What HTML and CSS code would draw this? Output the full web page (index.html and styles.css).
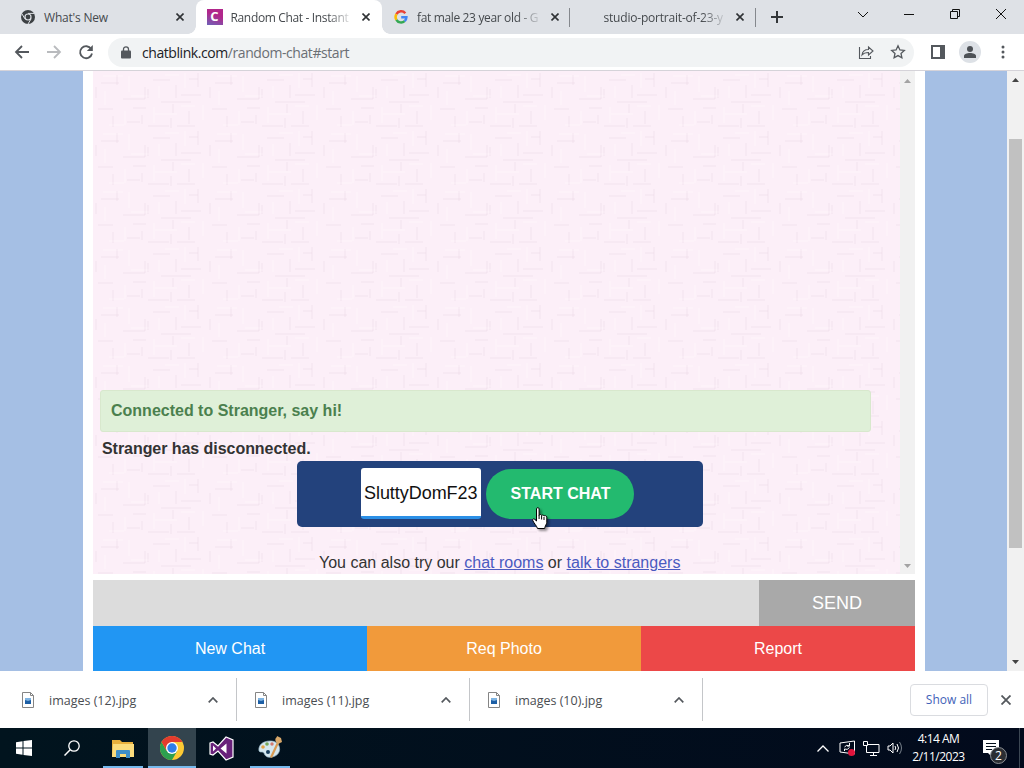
FILE: index.html
```html
<!DOCTYPE html>
<html>

<head>
    <meta charset="utf-8">
    <title>Random Chat - Instant</title>
    <link rel="stylesheet" href="styles.css">
</head>

<body>
    <div class="tabs">
        <div class="tab">
            <svg class="fav" viewBox="0 0 16 16"><circle cx="8" cy="8" r="7" fill="#3c4043"/><path d="M8 4.4h6.2M4.9 9.8L1.8 4.6M11.1 9.8L8 15" stroke="#dee1e6" stroke-width="1"/><circle cx="8" cy="8" r="3.6" fill="#dee1e6"/><circle cx="8" cy="8" r="2.4" fill="#3c4043"/></svg>
            <span class="title">What's New</span>
            <svg class="x" viewBox="0 0 8 8"><path d="M.5.5l7 7M7.5.5l-7 7"/></svg>
        </div>
        <div class="tab active">
            <span class="fav blink">C</span>
            <span class="title fade">Random Chat - Instant</span>
            <svg class="x" viewBox="0 0 8 8"><path d="M.5.5l7 7M7.5.5l-7 7"/></svg>
        </div>
        <div class="tab">
            <svg class="fav" viewBox="0 0 16 16" fill="none" stroke-width="2.5"><path d="M12.3 4.2A5.4 5.4 0 0 0 3.4 5.2" stroke="#ea4335"/><path d="M3.4 5.2a5.4 5.4 0 0 0 0 5.6" stroke="#fbbc05"/><path d="M3.4 10.8a5.4 5.4 0 0 0 8.2 1.3" stroke="#34a853"/><path d="M11.6 12.1a5.4 5.4 0 0 0 1.8-3.9H8.2" stroke="#4285f4"/></svg>
            <span class="title fade">fat male 23 year old - G</span>
            <svg class="x" viewBox="0 0 8 8"><path d="M.5.5l7 7M7.5.5l-7 7"/></svg>
        </div>
        <div class="tab line">
            <span class="fav"></span>
            <span class="title fade wide">studio-portrait-of-23-y</span>
            <svg class="x" viewBox="0 0 8 8"><path d="M.5.5l7 7M7.5.5l-7 7"/></svg>
        </div>
        <div class="plus line"><svg width="12" height="12" viewBox="0 0 12 12"><path d="M6 0v12M0 6h12" stroke="#333639" stroke-width="2"/></svg></div>
        <div class="winbtns">
            <svg width="46" height="28" viewBox="0 0 46 28"><path d="M18 12l5 5 5-5"/></svg>
            <svg width="46" height="28" viewBox="0 0 46 28"><path d="M18 14.5h10"/></svg>
            <svg width="46" height="28" viewBox="0 0 46 28"><path d="M18.5 11.5h7v7h-7zM20.5 11.5v-2h7v7h-2"/></svg>
            <svg width="46" height="28" viewBox="0 0 46 28"><path d="M18 9l10 10M28 9L18 19"/></svg>
        </div>
    </div>

    <div class="toolbar">
        <svg class="nav" viewBox="0 0 16 16"><path d="M15 8H2M8 2L2 8l6 6"/></svg>
        <svg class="nav off" viewBox="0 0 16 16"><path d="M1 8h13M8 2l6 6-6 6"/></svg>
        <svg class="nav" viewBox="0 0 16 16"><path d="M13.2 5A6 6 0 1 0 14 9.5"/><path d="M14.8 1v6H8.8z" fill="#54585d" stroke="none"/></svg>
        <div class="url">
            <svg width="10" height="13" viewBox="0 0 10 13"><rect y="4.5" width="10" height="8" rx="1" fill="#54585d"/><path d="M2.5 5V3.3a2.5 2.5 0 0 1 5 0V5" fill="none" stroke="#54585d" stroke-width="1.3"/></svg>
            <span class="addr">chatblink.com<i>/random-chat#start</i></span>
            <svg class="share" width="16" height="16" viewBox="0 0 16 16"><path d="M1.5 3v11.5h11V12M4 11c.5-3.5 2.5-5.5 6.5-5.5V3L15 7l-4.500 4V8.500C7.500 8.500 5.500 9.200 4 11z"/></svg>
            <svg class="star" width="16" height="16" viewBox="0 0 16 16"><path d="M8 1.8l1.9 4.1 4.4.5-3.3 3 .9 4.4L8 11.6l-3.9 2.2.9-4.4-3.3-3 4.4-.5z"/></svg>
        </div>
        <svg class="side" width="14" height="14" viewBox="0 0 14 14"><path d="M1 1h12v12H1z" fill="none" stroke="#54585d" stroke-width="2"/><path d="M9 0h5v14H9z" fill="#54585d"/></svg>
        <svg class="user" width="22" height="22" viewBox="0 0 22 22"><circle cx="11" cy="11" r="11" fill="#dde1e6"/><circle cx="11" cy="8" r="3" fill="#4d5156"/><path d="M5 17v-2c0-2 3-3 6-3s6 1 6 3v2z" fill="#4d5156"/></svg>
        <svg class="dots" width="4" height="14" viewBox="0 0 4 14"><circle cx="2" cy="2" r="1.5"/><circle cx="2" cy="7" r="1.5"/><circle cx="2" cy="12" r="1.5"/></svg>
    </div>

    <div class="page">
        <div class="main">
            <div class="chat">
                <div class="log">
                    <div class="alert">Connected to Stranger, say hi!</div>
                    <div class="gone">Stranger has disconnected.</div>
                    <div class="startbox">
                        <input class="nick" type="text" value="SluttyDomF23">
                        <button class="start">START CHAT</button>
                        <svg class="hand" viewBox="0 0 17 24"><path d="M5 1.8c0-1.5 2.6-1.5 2.6 0v6.5c.3-1.2 2.4-1 2.5.3.3-1 2.3-.8 2.4.5.4-.9 2.8-.6 2.8 1v5.200c0 2-1.800 3.300-2.100 6.200H6c-.5-2.300-4-5.800-4.800-8.200-.4-1.500 1.200-2 2.200-.8L5 14z" fill="#fff" stroke="#000"/><path d="M7.600 8v4M10.100 9v3.500M12.500 10v3" stroke="#000"/></svg>
                    </div>
                    <p class="also">You can also try our <a href="#">chat rooms</a> or <a href="#">talk to strangers</a></p>
                </div>
                <div class="bar">
                    <svg width="7" height="4" viewBox="0 0 7 4"><path d="M0 4l3.5-4L7 4z"/></svg>
                    <svg width="7" height="4" viewBox="0 0 7 4"><path d="M0 0l3.5 4L7 0z"/></svg>
                </div>
            </div>
            <div class="message">
                <div class="text"></div>
                <div class="send">SEND</div>
            </div>
            <div class="actions">
                <div class="new">New Chat</div>
                <div class="photo">Req Photo</div>
                <div class="report">Report</div>
            </div>
        </div>
        <div class="scroll">
            <svg width="7" height="4" viewBox="0 0 7 4"><path d="M0 4l3.5-4L7 4z"/></svg>
            <div class="thumb"></div>
            <svg width="7" height="4" viewBox="0 0 7 4"><path d="M0 0l3.5 4L7 0z"/></svg>
        </div>
    </div>

    <div class="downloads">
        <div class="file">
            <svg width="12" height="16" viewBox="0 0 12 16"><path d="M.5.5h8l3 3v12H.5z" fill="#fff" stroke="#858585"/><path d="M8.5.5v3h3" fill="none" stroke="#858585"/><path d="M3 6h6v6H3z" fill="#1d5fa5"/><path d="M3 6h6v2L6 9 3 8z" fill="#7fb4e2"/></svg>
            <span>images (12).jpg</span>
            <svg class="up" width="10" height="6" viewBox="0 0 10 6"><path d="M.7 5.3L5 1l4.3 4.3"/></svg>
        </div>
        <div class="file">
            <svg width="12" height="16" viewBox="0 0 12 16"><path d="M.5.5h8l3 3v12H.5z" fill="#fff" stroke="#858585"/><path d="M8.5.5v3h3" fill="none" stroke="#858585"/><path d="M3 6h6v6H3z" fill="#1d5fa5"/><path d="M3 6h6v2L6 9 3 8z" fill="#7fb4e2"/></svg>
            <span>images (11).jpg</span>
            <svg class="up" width="10" height="6" viewBox="0 0 10 6"><path d="M.7 5.3L5 1l4.3 4.3"/></svg>
        </div>
        <div class="file">
            <svg width="12" height="16" viewBox="0 0 12 16"><path d="M.5.5h8l3 3v12H.5z" fill="#fff" stroke="#858585"/><path d="M8.5.5v3h3" fill="none" stroke="#858585"/><path d="M3 6h6v6H3z" fill="#1d5fa5"/><path d="M3 6h6v2L6 9 3 8z" fill="#7fb4e2"/></svg>
            <span>images (10).jpg</span>
            <svg class="up" width="10" height="6" viewBox="0 0 10 6"><path d="M.7 5.3L5 1l4.3 4.3"/></svg>
        </div>
        <div class="showall">Show all</div>
        <svg class="close" width="10" height="10" viewBox="0 0 10 10"><path d="M.5.5l9 9M9.5.5l-9 9"/></svg>
    </div>

    <div class="taskbar">
        <div class="task win"><svg width="16" height="16" viewBox="0 0 16 16"><path d="M0 2.2L6.5 1.3v6.2H0zM7.5 1.1L16 0v7.500H7.500zM0 8.500h6.500v6.200L0 13.800zM7.500 8.500H16V16l-8.500-1.100z" fill="#fff"/></svg></div>
        <div class="task find"><svg width="16" height="16" viewBox="0 0 16 16"><circle cx="10" cy="6" r="5.2" fill="none" stroke="#fff" stroke-width="1.3"/><path d="M6.2 9.8L.5 15.5" stroke="#fff" stroke-width="1.5"/></svg></div>
        <div class="task open"><svg width="22" height="19" viewBox="0 0 22 19"><path d="M0 1h8l2 2h11v15H0z" fill="#e8b03c"/><path d="M1 5h21v13H0z" fill="#fbdc7c"/><path d="M4 19v-7q0-1 1-1h12q1 0 1 1v7h-4v-4H8v4z" fill="#3f8fc9"/></svg></div>
        <div class="task open on"><svg width="24" height="24" viewBox="0 0 24 24"><circle cx="12" cy="12" r="12" fill="#fcc934"/><path d="M1.6 6L6.8 15h10.4L12 24A12 12 0 0 1 1.6 6z" fill="#2da04f"/><path d="M1.6 6A12 12 0 0 1 22.4 6H12L6.8 15z" fill="#e33b2e"/><circle cx="12" cy="12" r="6" fill="#fff"/><circle cx="12" cy="12" r="4.7" fill="#2f7de9"/></svg></div>
        <div class="task"><svg width="25" height="25" viewBox="0 0 25 25"><path d="M1 7l3-1 5 4 8-9 7 3v17l-7 3-8-9-5 4-3-1z" fill="#68217a" stroke="#fff" stroke-width="1.2"/><path d="M4 9.5v6l3-3zM11.5 12.5l6-5v10z" fill="#fff"/></svg></div>
        <div class="task open"><svg width="24" height="24" viewBox="0 0 24 24"><path d="M12 5C5 5 0 9 1 15c1 2 4 0 5 2 1 3 3 5 8 4 6-1 9-6 7-11-1-3-4-5-9-5z" fill="#d5e7ef" stroke="#9ab9c8" stroke-width=".7"/><circle cx="5" cy="11" r="1.8" fill="#e3a144"/><circle cx="9" cy="8" r="1.8" fill="#76a75b"/><circle cx="14" cy="8" r="1.7" fill="#d27a70"/><circle cx="10" cy="16" r="2" fill="#173d5c"/><path d="M12 21L20 4l2 1-8 17z" fill="#d89b54"/><path d="M18 6c-2-4 1-4 1-6l4 2 1 4-4 2z" fill="#d9a86a"/></svg></div>
        <div class="tray">
            <svg width="12" height="7" viewBox="0 0 12 7"><path d="M.5 6.5L6 1l5.5 5.5" stroke-width="1.3"/></svg>
            <svg class="sync" width="17" height="16" viewBox="0 0 17 16"><path d="M1 3l14.5-2v13L1 12zM5.5 7q2-3 5-1M10.5 3v3H8M10.5 7.5q-2 3-5 1.5v2"/><circle cx="12.5" cy="12.5" r="3.5" fill="#e0143c" stroke="none"/></svg>
            <svg width="17" height="15" viewBox="0 0 17 15"><path d="M5 3.5h11v8H3.5V5M7 14.5h7M10.5 11.5v3M.5.5h4v4h-4z"/></svg>
            <svg width="16" height="14" viewBox="0 0 16 14"><path d="M1 5h2l3-3v10L3 9H1zM8 5q1.5 2 0 4M10 3q3 4 0 8"/><path d="M12.5 1q4 6 0 12" stroke="#77808a"/></svg>
            <div class="clock">4:14 AM<br>2/11/2023</div>
            <div class="notes">
                <svg width="16" height="17" viewBox="0 0 16 17"><path d="M0 0h16v13H9v4l-4-4H0z" fill="#fff" stroke="none"/><path d="M3 3.5h10M3 6.5h10M3 9.5h6" stroke="#04101c"/></svg>
                <span class="count">2</span>
            </div>
        </div>
    </div>
</body>

</html>
```

FILE: styles.css
```css
* {
    box-sizing: border-box;
}

body {
    margin: 0px;
    width: 1024px;
    height: 768px;
    overflow: hidden;
    display: flex;
    flex-direction: column;
    font-family: "Open Sans", "Noto Sans", sans-serif;
    font-size: 12px;
}

svg {
    flex-shrink: 0;
    display: block;
}

.tabs {
    height: 34px;
    background-color: #dee1e6;
    display: flex;
    padding-left: 9px;
}

.tab {
    width: 186.5px;
    height: 34px;
    display: flex;
    align-items: center;
    padding: 0px 12px 0px 11px;
    color: #45494d;
}

.active {
    position: relative;
    background-color: white;
    border-radius: 8px 8px 0px 0px;
}

/* curved feet of the open tab */
.active::before,
.active::after {
    content: "";
    position: absolute;
    bottom: 0px;
    left: -8px;
    width: 8px;
    height: 8px;
    background: radial-gradient(circle at 0px 0px, transparent 7.5px, white 8px);
}

.active::after {
    left: auto;
    right: -8px;
    background: radial-gradient(circle at 8px 0px, transparent 7.5px, white 8px);
}

.fav {
    width: 16px;
    height: 16px;
    margin-right: 8px;
    flex-shrink: 0;
}

.blink {
    background: linear-gradient(20deg, #6f62b8, #b1278b 60%);
    color: white;
    font-weight: bold;
    font-size: 13px;
    line-height: 15px;
    text-align: center;
}

.title {
    flex: 1;
    white-space: nowrap;
    letter-spacing: -0.2px;
}

.fade {
    letter-spacing: -0.35px;
    mask-image: linear-gradient(to right, black 82%, transparent 104%);
}

.wide {
    letter-spacing: -0.2px;
}

.x {
    width: 8px;
    height: 8px;
    margin-left: 13px;
    fill: none;
    stroke: #2f3235;
    stroke-width: 1.6;
}

.line {
    background: linear-gradient(#85888d, #85888d) no-repeat 0px 8px / 1px 19px;
}

.plus {
    padding: 11px 0px 0px 16px;
    width: 60px;
}

.winbtns {
    margin-left: auto;
    display: flex;
    fill: none;
    stroke: #111;
}

.toolbar {
    height: 37px;
    background-color: white;
    border-bottom: 1px solid #d5d3d9;
    display: flex;
    align-items: center;
    padding-left: 14px;
}

.nav {
    width: 16px;
    height: 16px;
    margin-right: 16px;
    fill: none;
    stroke: #54585d;
    stroke-width: 1.8;
}

.off {
    stroke: #b9bbbe;
}

.url {
    width: 806px;
    height: 29px;
    margin-left: -2px;
    border-radius: 15px;
    background-color: #f1f3f4;
    display: flex;
    align-items: center;
    padding-left: 13px;
}

.addr {
    font-size: 14px;
    letter-spacing: -0.43px;
    margin-left: 11px;
    flex: 1;
    color: #202124;
}

.addr i {
    font-style: normal;
    color: #6b6f74;
}

.share,
.star {
    fill: none;
    stroke: #54585d;
    stroke-width: 1.3;
    margin-right: 16px;
}

.share {
    stroke-width: 1.1;
}

.star {
    margin-right: 8px;
}

.side {
    margin-left: 17px;
}

.user {
    margin-left: 14px;
}

.dots {
    margin-left: 20px;
    fill: #54585d;
}

.page {
    height: 600px;
    display: flex;
    background-color: #a5bfe4;
    font-family: "Liberation Sans", Arial, sans-serif;
}

.main {
    width: 842px;
    margin-left: 83px;
    padding: 0px 10px;
    background-color: white;
}

.chat {
    height: 503px;
    display: flex;
}

/* pink paper with a faint woven pattern */
.log {
    width: 807px;
    padding: 319px 0px 0px 7px;
    font-size: 16px;
    color: #333;
    background-color: #fceff8;
    background-image: url("data:image/svg+xml,%3Csvg xmlns='http://www.w3.org/2000/svg' width='114' height='58'%3E%3Cpath d='M3 16v11M24 4v10M52 16v12M55 18v9M83 14v13M105 2v14M20 45v11M49 44v9M78 47v10M80 33v9M96 40v13M8 12h18M30 28h22M60 9h17M68 31h30M5 38h15M34 51h13M55 55h21M88 24h20M40 37h13M84 55h18M96 8h9' fill='none' stroke='%23dfc9da' stroke-opacity='.33'/%3E%3Cpath d='M12 20v14M36 5v16M66 15v12M92 2v15M32 40v14M61 36v16M110 34v15M10 5h20M38 25h18M72 4h14M16 54h15M62 43h22M88 35h14' fill='none' stroke='%23fff' stroke-opacity='.4'/%3E%3C/svg%3E");
}

.alert {
    width: 771px;
    height: 42px;
    line-height: 39px;
    padding-left: 10px;
    border: 1px solid #d8e8cd;
    border-radius: 3px;
    background-color: #dff0d8;
    color: #4b804e;
    font-weight: bold;
}

.gone {
    height: 29px;
    line-height: 33px;
    padding-left: 2px;
    font-weight: bold;
    letter-spacing: -0.05px;
}

.startbox {
    position: relative;
    width: 406px;
    height: 66px;
    margin-left: 197px;
    border-radius: 5px;
    background-color: #23427c;
    display: flex;
    align-items: center;
    justify-content: center;
    gap: 5px;
    padding-right: 5px;
}

.nick {
    width: 120px;
    height: 51px;
    margin: -1px 0px 0px;
    padding: 2px 2px 0px 3px;
    border: none;
    border-bottom: 3px solid #2b8fe6;
    border-radius: 3px;
    font-family: inherit;
    font-size: 18px;
    letter-spacing: -0.05px;
    color: #111;
}

.start {
    width: 148px;
    height: 50px;
    padding: 0px 0px 1px 1px;
    border: none;
    border-radius: 25px;
    background-color: #23ba6f;
    color: white;
    font-family: inherit;
    font-size: 16px;
    font-weight: bold;
}

.hand {
    position: absolute;
    left: 234px;
    top: 46px;
    width: 18px;
    height: 24px;
    filter: drop-shadow(2px 2px 1px rgba(0, 0, 0, .4));
}

.also {
    margin: 26px 0px 0px 219px;
    line-height: 19px;
}

.also a {
    color: #4a5ac0;
}

.bar {
    width: 15px;
    background-color: #f1f1f1;
    display: flex;
    flex-direction: column;
    justify-content: space-between;
    align-items: center;
    padding: 8px 0px 6px;
    fill: #a3a3a3;
}

.message {
    display: flex;
    height: 52px;
    padding-top: 6px;
    font-size: 18px;
}

.text {
    flex: 1;
    background-color: #dcdcdc;
}

.send {
    width: 156px;
    line-height: 46px;
    background-color: #a9a9a9;
    color: white;
    text-align: center;
}

.actions {
    display: flex;
    height: 45px;
    line-height: 45px;
    font-size: 16px;
    color: white;
    text-align: center;
}

.actions div {
    flex: 1;
}

.new {
    background-color: #2196f3;
}

.photo {
    background-color: #f19a3b;
}

.report {
    background-color: #ec4848;
}

.scroll {
    width: 17px;
    margin-left: auto;
    background-color: #f1f1f1;
    display: flex;
    flex-direction: column;
    align-items: center;
    padding: 7px 0px;
    fill: #444;
}

.thumb {
    width: 13px;
    height: 409px;
    margin: 57px 0px auto;
    background-color: #c1c1c1;
}

.downloads {
    height: 57px;
    background-color: white;
    display: flex;
    align-items: center;
}

.file {
    width: 233px;
    height: 43px;
    display: flex;
    align-items: center;
    padding: 0px 18px 0px 18px;
    border-right: 1px solid #c4c6c9;
    font-size: 12.5px;
    color: #4a4d51;
}

.file:first-child {
    width: 237px;
    padding-left: 22px;
}

.file span {
    margin-left: 15px;
    padding-top: 2px;
}

.up {
    margin-left: auto;
    fill: none;
    stroke: #54585d;
    stroke-width: 1.7;
}

.showall {
    width: 78px;
    height: 32px;
    line-height: 30px;
    margin-left: auto;
    border: 1px solid #dadce0;
    border-radius: 4px;
    text-align: center;
    color: #3f62b8;
}

.close {
    margin: 0px 13px;
    stroke: #54585d;
    stroke-width: 1.8;
}

.taskbar {
    height: 40px;
    display: flex;
    background: linear-gradient(90deg, #01141e, #020a1c);
}

.task {
    width: 48px;
    height: 40px;
    margin-right: 1px;
    display: flex;
    align-items: center;
    justify-content: center;
}

.win {
    margin-right: 0px;
}

.find {
    margin-right: 3px;
}

.open {
    background: linear-gradient(#76b9ed, #76b9ed) no-repeat center bottom / 40px 2px;
}

.on {
    background-color: #33444e;
    background-size: 48px 2px;
}

.tray {
    margin-left: auto;
    padding-right: 4px;
    display: flex;
    align-items: center;
    gap: 7px;
    fill: none;
    stroke: white;
    color: white;
}

.sync {
    margin-left: 3px;
}

.clock {
    width: 60px;
    padding-right: 3px;
    line-height: 18px;
    text-align: center;
    font-size: 12px;
    letter-spacing: -0.5px;
    stroke: none;
}

.notes {
    position: relative;
    width: 43px;
    height: 40px;
    padding: 12px 0px 0px 6px;
    border-right: 1px solid #3c4753;
}

.count {
    position: absolute;
    left: 13px;
    top: 19px;
    width: 17px;
    height: 17px;
    line-height: 15px;
    border: 1px solid #8b8f94;
    border-radius: 9px;
    background-color: #2b2e33;
    text-align: center;
    font-size: 12px;
}
```
